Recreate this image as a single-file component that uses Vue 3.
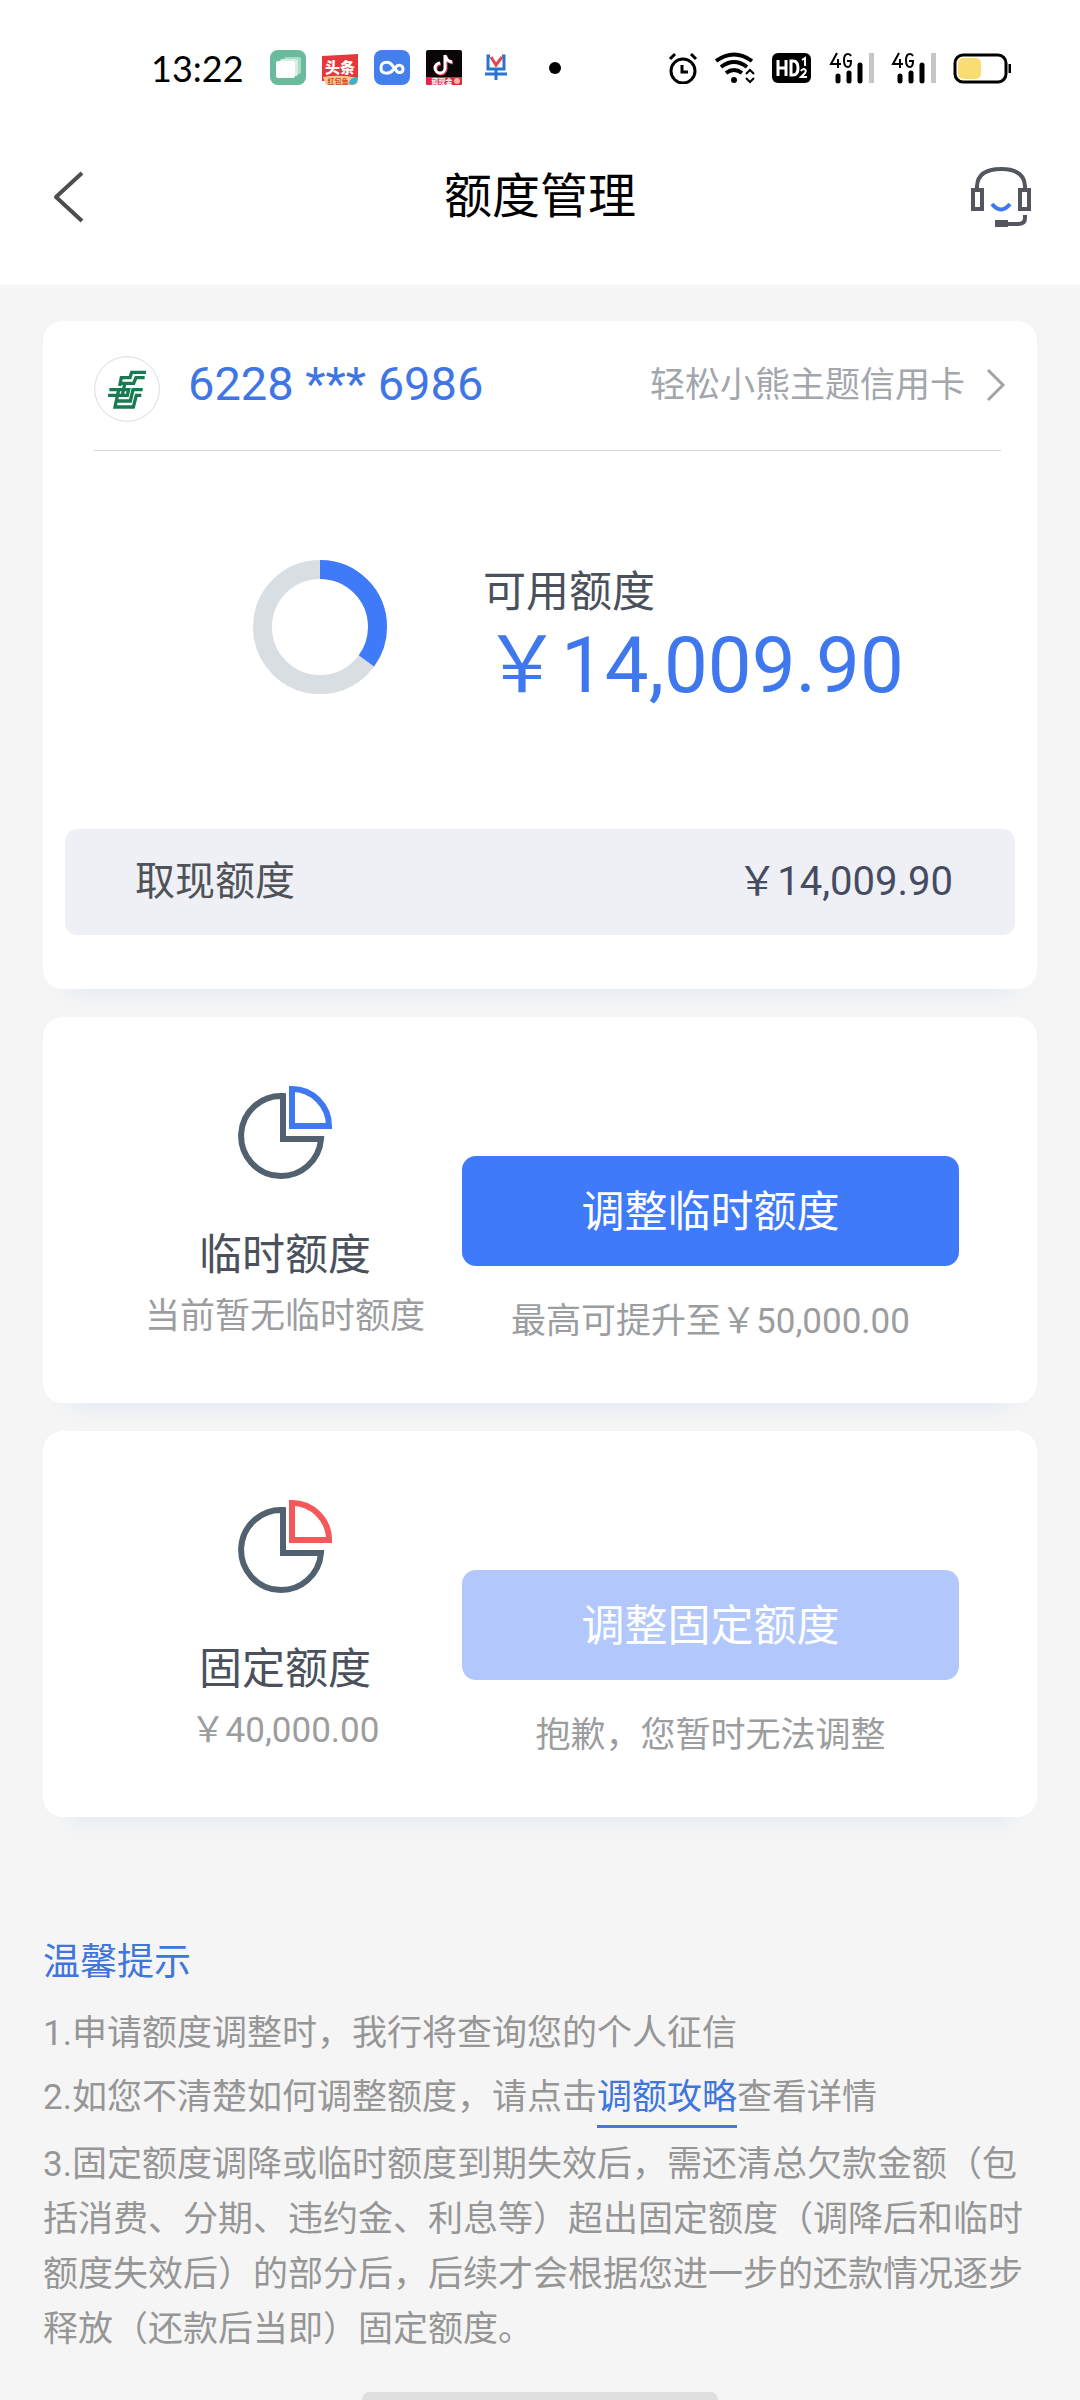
<script setup>
import { computed } from 'vue'

const card = {
  number: '6228 *** 6986',
  name: '轻松小熊主题信用卡',
  available: '14,009.90',
  cash: '14,009.90',
  ratio: 0.35
}

const limits = [
  {
    id: 'temporary',
    title: '临时额度',
    detail: '当前暂无临时额度',
    action: '调整临时额度',
    note: '最高可提升至￥50,000.00',
    accent: '#3f78f0',
    disabled: false
  },
  {
    id: 'fixed',
    title: '固定额度',
    detail: '￥40,000.00',
    action: '调整固定额度',
    note: '抱歉，您暂时无法调整',
    accent: '#f4585a',
    disabled: true
  }
]

const circumference = 2 * Math.PI * 57.5
const dash = computed(() => `${circumference * card.ratio} ${circumference}`)
</script>

<template>
  <div class="page">
    <header class="top">
      <div class="status">
        <time class="clock">13:22</time>
        <div class="apps">
          <svg width="36" height="36" viewBox="0 0 36 36">
            <rect width="36" height="35" rx="8" fill="#68bb9b" />
            <rect x="14" y="7" width="17" height="17" rx="2" fill="#a9dcc8" />
            <rect x="10" y="9" width="18" height="17" rx="2" fill="#d4efe4" />
            <rect x="6" y="11" width="19" height="17" rx="2" fill="#fff" />
          </svg>
          <svg width="36" height="36" viewBox="0 0 36 36">
            <path d="M0 6 L36 4 V31 H0Z" fill="#e6383c" />
            <text x="18" y="23" text-anchor="middle" class="app-name">头条</text>
            <path d="M1 27 Q18 24 36 28 V33 Q34 35 31 35 H6 Q3 35 3 32Z" fill="#f8c98c" />
            <text x="16" y="34" text-anchor="middle" class="app-tag">红包鱼</text>
            <path d="M27 34 Q27 27 36 27 Q36 34 30 35Z" fill="#38b3cf" />
          </svg>
          <svg width="36" height="36" viewBox="0 0 36 36">
            <rect width="36" height="35" rx="8" fill="#4380ec" />
            <path d="M19 20 C16 24 7 25 7 18 C7 11 15 11 18 15 L22 20 C24 24 29 23 29 19 C29 15 24 14 22 17 L19 20" fill="none" stroke="#fff" stroke-width="3" stroke-linecap="round" />
          </svg>
          <svg width="36" height="36" viewBox="0 0 36 36">
            <rect width="36" height="35" rx="2" fill="#0a0507" />
            <path d="M19 5 V18 A5 5 0 1 1 14 13 M19 5 Q20 11 26 12" fill="none" stroke="#e9476a" stroke-width="3" transform="translate(1 1)" />
            <path d="M19 5 V18 A5 5 0 1 1 14 13 M19 5 Q20 11 26 12" fill="none" stroke="#fff" stroke-width="3" />
            <path d="M0 27 H36 V33 Q36 35 34 35 H2 Q0 35 0 33Z" fill="#e5254a" />
            <text x="16" y="34" text-anchor="middle" class="app-tag light">薅现金</text>
            <circle cx="31" cy="31" r="3" fill="#f9b6a0" />
          </svg>
          <svg width="36" height="36" viewBox="0 0 36 36">
            <path d="M12 6 H10 V19 H26 V6 H24 M7 24 H29 M18 19 V30" fill="none" stroke="#2c74c9" stroke-width="3" />
            <path d="M13 7 L18 15 L24 7" fill="none" stroke="#e5484d" stroke-width="3" />
          </svg>
        </div>
        <span class="dot"></span>
        <div class="system">
          <svg width="30" height="32" viewBox="0 0 30 32">
            <circle cx="15" cy="19" r="12" fill="none" stroke="#000" stroke-width="3" />
            <path d="M2 7 L7 2 M28 7 L23 2" stroke="#000" stroke-width="3" />
            <path d="M14 13 V20 H20" fill="none" stroke="#000" stroke-width="3" />
          </svg>
          <svg width="40" height="32" viewBox="0 0 40 32">
            <g fill="none" stroke="#000" stroke-width="4">
              <path d="M1 9 Q19 -4 37 9" />
              <path d="M6 15 Q19 5 32 15" />
              <path d="M11 21 Q19 15 27 21" />
            </g>
            <circle cx="19" cy="28" r="3" />
            <path d="M31 22 L35 18 L39 22 M31 26 L35 30 L39 26" fill="none" stroke="#000" stroke-width="2" />
          </svg>
          <svg width="40" height="32" viewBox="0 0 40 32">
            <rect y="1" width="39" height="30" rx="6" />
            <path d="M6 8 V24 M14 8 V24 M6 16 H14 M19 9 V23 H21 Q26 23 26 16 Q26 9 21 9Z" fill="none" stroke="#fff" stroke-width="3" />
            <path d="M30 8 L33 6 V14 M29 19 Q30 17 32 17 Q35 18 33 21 L29 25 H35" fill="none" stroke="#fff" stroke-width="2" />
          </svg>
          <svg v-for="sim in 2" :key="sim" width="45" height="32" viewBox="0 0 45 32">
            <path d="M8 1 L2 12 H12 M9 7 V16 M22 4 Q21 2 19 2 Q15 2 15 8 Q15 15 19 15 Q22 15 22 9 H18" fill="none" stroke="#000" stroke-width="2" />
            <path d="M9 24 V29 M20 21 V29 M31 13 V29" stroke="#000" stroke-width="5" stroke-linecap="round" />
            <rect x="40" y="1" width="5" height="30" fill="#c6c6c6" />
          </svg>
          <svg width="58" height="32" viewBox="0 0 58 32">
            <rect x="2" y="3" width="51" height="27" rx="8" fill="none" stroke="#000" stroke-width="3" />
            <rect x="5" y="6" width="23" height="21" rx="5" fill="#f9dc72" />
            <path d="M57 12 V21" stroke="#000" stroke-width="3" />
          </svg>
        </div>
      </div>
      <nav class="nav">
        <button class="icon-button" type="button" aria-label="返回">
          <svg width="36" height="52" viewBox="0 0 36 52">
            <path d="M34 2 L8 26 L34 50" fill="none" stroke="#4d4d4d" stroke-width="4" stroke-linejoin="round" />
          </svg>
        </button>
        <h1>额度管理</h1>
        <button class="icon-button" type="button" aria-label="客服">
          <svg width="62" height="62" viewBox="0 0 62 62">
            <g fill="none" stroke="#53555f" stroke-width="4">
              <path d="M7 22 V20 Q8 3 31 3 Q54 3 55 20 V22" />
              <rect x="3" y="24" width="9" height="19" />
              <rect x="50" y="24" width="9" height="19" />
              <path d="M55 49 V52 Q55 58 48 58 H36" />
            </g>
            <rect x="25" y="54" width="13" height="7" fill="#53555f" />
            <path d="M22 38 Q31 49 40 38" fill="none" stroke="#3f78ee" stroke-width="4" />
          </svg>
        </button>
      </nav>
    </header>

    <main class="content">
      <section class="card">
        <a class="account" href="#card">
          <svg width="66" height="66" viewBox="0 0 198 198">
            <circle cx="99" cy="99" r="97" fill="#fff" stroke="#dcdcdc" stroke-width="3" />
            <g fill="none" stroke="#177a50" stroke-width="10">
              <path d="M156 49 H113 L108 65 H82 L77 90" />
              <path d="M152 65 H126 L119 82 H80" />
              <path d="M46 101 H104 L100 118 H42" />
              <path d="M146 101 H117 L109 135 H70" />
              <path d="M142 118 H127 L118 153 H63 L75 98" />
              <path d="M92 84 L85 118" />
            </g>
          </svg>
          <span class="number">{{ card.number }}</span>
          <span class="card-name">{{ card.name }}</span>
          <svg class="chevron" width="20" height="60" viewBox="0 0 20 60">
            <path d="M2 14 L17 29 L2 44" fill="none" stroke="#a0a3a8" stroke-width="3" />
          </svg>
        </a>
        <div class="available">
          <svg width="134" height="134" viewBox="0 0 134 134">
            <circle cx="67" cy="67" r="57.5" fill="none" stroke="#d9dee2" stroke-width="19" />
            <circle cx="67" cy="67" r="57.5" fill="none" stroke="#3f7af8" stroke-width="19" :stroke-dasharray="dash" transform="rotate(-90 67 67)" />
          </svg>
          <div>
            <p class="available-label">可用额度</p>
            <p class="available-amount">￥{{ card.available }}</p>
          </div>
        </div>
        <div class="cash">
          <span>取现额度</span>
          <span class="cash-amount">￥{{ card.cash }}</span>
        </div>
      </section>

      <section v-for="item in limits" :key="item.id" class="card limit">
        <div class="summary">
          <svg width="94" height="94" viewBox="0 0 94 94">
            <path d="M45 10 A40 40 0 1 0 83 53 H45Z" fill="none" stroke="#52616f" stroke-width="6" />
            <path d="M54 3 V40 H91 A37 37 0 0 0 54 3Z" fill="none" :stroke="item.accent" stroke-width="6" />
          </svg>
          <h2>{{ item.title }}</h2>
          <p class="muted">{{ item.detail }}</p>
        </div>
        <div class="adjust">
          <button class="action" type="button" :disabled="item.disabled">{{ item.action }}</button>
          <p class="muted">{{ item.note }}</p>
        </div>
      </section>

      <section class="tips">
        <h3>温馨提示</h3>
        <p>1.申请额度调整时，我行将查询您的个人征信</p>
        <p>2.如您不清楚如何调整额度，请点击<a href="#guide">调额攻略</a>查看详情</p>
        <p>3.固定额度调降或临时额度到期失效后，需还清总欠款金额（包括消费、分期、违约金、利息等）超出固定额度（调降后和临时额度失效后）的部分后，后续才会根据您进一步的还款情况逐步释放（还款后当即）固定额度。</p>
      </section>
    </main>
    <div class="home-bar"></div>
  </div>
</template>

<style>
body {
  margin: 0;
  background: #f5f5f5;
}
</style>

<style scoped>
.page {
  font-family: Roboto, "Noto Sans CJK SC", sans-serif;
  font-weight: 400;
  color: #4a505c;
  background: #f5f5f5;
}

h1,
h2,
h3,
p {
  margin: 0;
  font-weight: inherit;
}

button {
  border: 0;
  padding: 0;
  font: inherit;
  background: none;
}

svg {
  display: block;
  flex: none;
}

.top {
  background: #fff;
  padding-bottom: 27px;
}

.status {
  display: flex;
  align-items: center;
  height: 136px;
  padding: 0 69px 0 151px;
}

.clock {
  width: 119px;
  font-family: Lato, sans-serif;
  font-size: 36px;
  color: #000;
}

.apps {
  display: flex;
  gap: 16px;
}

.app-name {
  font-size: 15px;
  font-weight: 900;
  fill: #fff;
}

.app-tag {
  font-size: 7px;
  font-weight: 700;
  fill: #c8502c;
}

.app-tag.light {
  fill: #fff;
}

.dot {
  width: 12px;
  height: 12px;
  margin-left: 35px;
  border-radius: 50%;
  background: #000;
}

.system {
  display: flex;
  gap: 17px;
  margin-left: auto;
}

.nav {
  display: flex;
  align-items: center;
  justify-content: space-between;
  height: 122px;
  padding: 0 48px;
}

.icon-button {
  display: flex;
  width: 62px;
}

h1 {
  font-size: 48px;
  line-height: 72px;
  color: #000;
}

.content {
  display: flex;
  flex-direction: column;
  gap: 28px;
  padding: 36px 43px 35px;
}

.card {
  border-radius: 20px;
  background: #fff;
  box-shadow: 0 30px 20px -26px #e2e9f3;
}

.account {
  display: flex;
  height: 94px;
  margin: 0 36px 0 51px;
  padding-top: 35px;
  border-bottom: 1px solid #d6d6d6;
  line-height: 56px;
  color: inherit;
  text-decoration: none;
}

.number {
  margin-left: 28px;
  font-size: 47px;
  color: #4076e4;
}

.card-name {
  margin-left: auto;
  font-size: 35px;
  line-height: 60px;
  color: #a2a6ad;
}

.chevron {
  margin: 0 -5px 0 21px;
}

.available {
  display: flex;
  gap: 96px;
  padding: 109px 40px 121px 210px;
}

.available-label {
  font-size: 43px;
  line-height: 64px;
}

.available-amount {
  font-size: 78px;
  line-height: 84px;
  color: #3f78ee;
}

.cash {
  display: flex;
  align-items: center;
  justify-content: space-between;
  height: 106px;
  margin: 0 22px;
  padding: 0 62px 0 70px;
  border-radius: 12px;
  font-size: 40px;
  line-height: 60px;
  color: #4f5358;
  background: #eef0f5;
}

.cash-amount {
  color: #454b60;
}

.card:first-child {
  padding-bottom: 54px;
}

.limit {
  display: grid;
  grid-template-columns: 354fr 497fr;
  padding: 69px 78px 49px 65px;
  text-align: center;
}

.summary {
  display: flex;
  flex-direction: column;
  align-items: center;
}

h2 {
  margin-top: 45px;
  font-size: 43px;
  line-height: 60px;
}

.muted {
  font-size: 35px;
  line-height: 64px;
  color: #9b9d9f;
}

.adjust {
  padding-top: 70px;
}

.action {
  display: block;
  width: 100%;
  height: 110px;
  margin-bottom: 24px;
  padding-bottom: 6px;
  border-radius: 14px;
  font-size: 43px;
  color: #fff;
  background: #3f7afb;
}

.action:disabled {
  background: #b2c8fc;
}

.tips {
  display: flex;
  flex-direction: column;
  gap: 9px;
  margin-top: 90px;
  font-size: 35px;
  line-height: 55px;
  color: #969696;
}

.tips h3 {
  margin-bottom: 6px;
  font-size: 37px;
  line-height: 56px;
  color: #4076dc;
}

.tips a {
  display: inline-block;
  border-bottom: 3px solid #4a78d0;
  color: #4076dc;
  text-decoration: none;
}

.home-bar {
  width: 33%;
  height: 9px;
  margin: 0 auto;
  border-radius: 8px 8px 0 0;
  background: #dfdfdf;
}
</style>
